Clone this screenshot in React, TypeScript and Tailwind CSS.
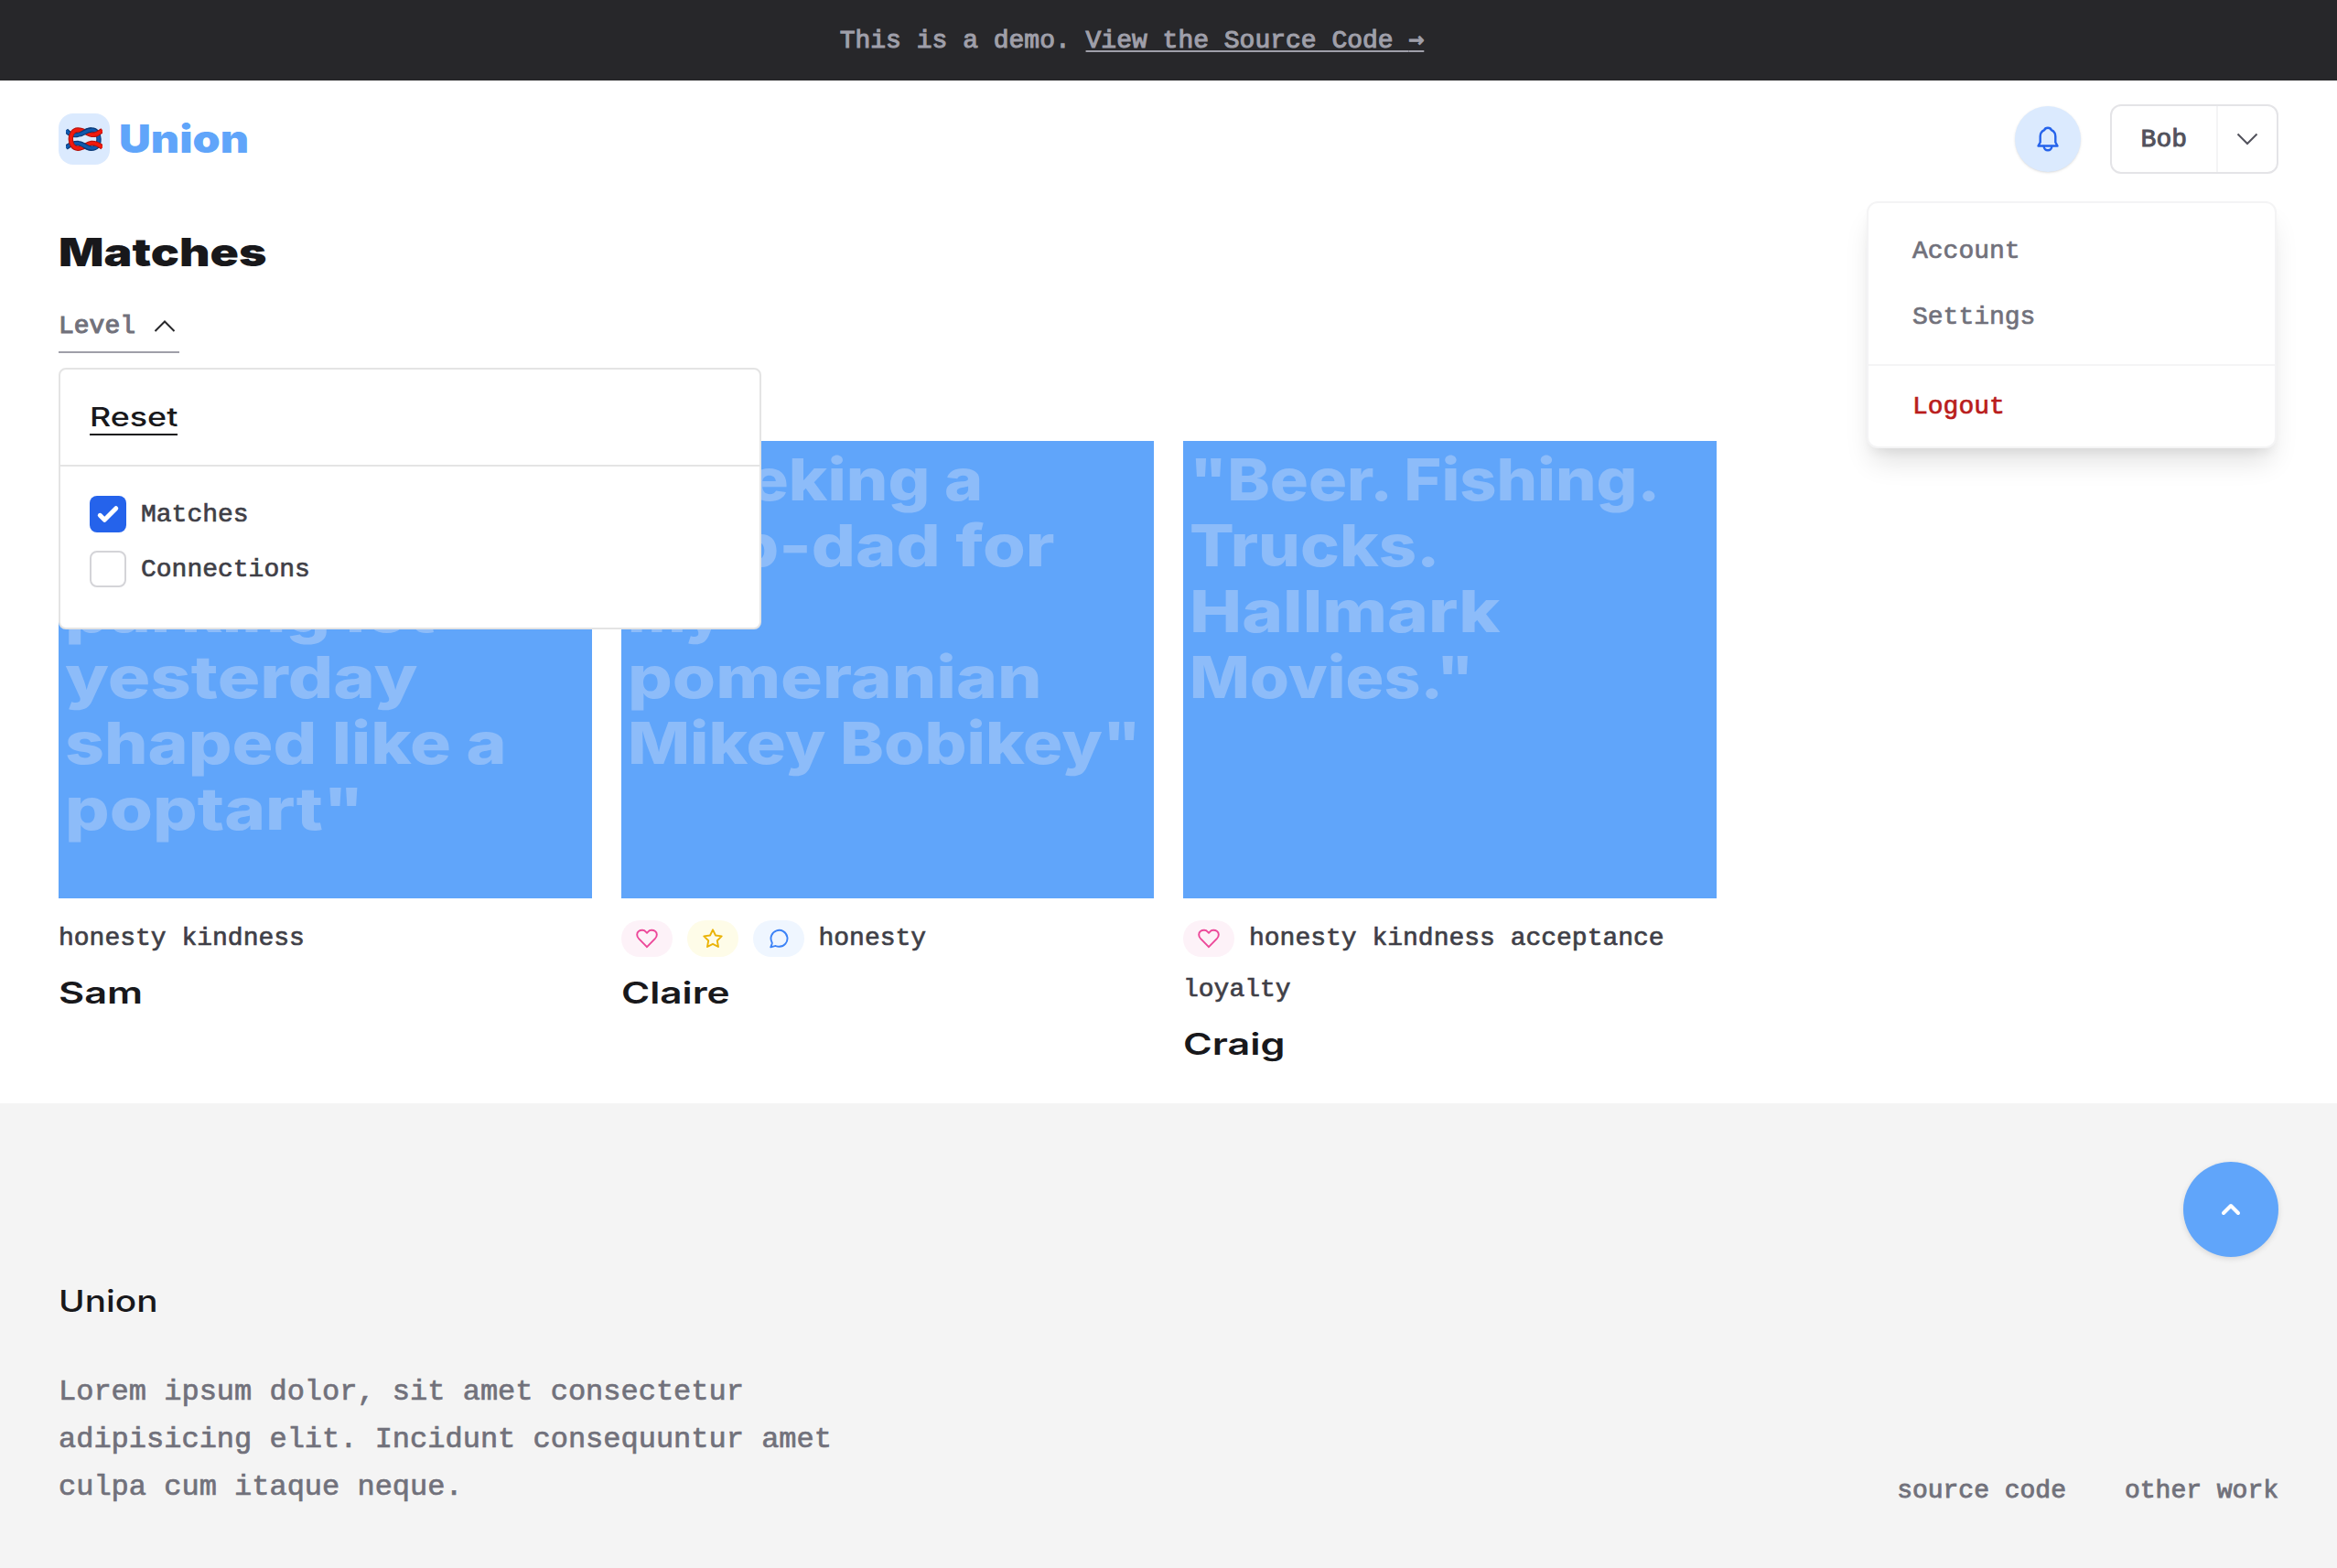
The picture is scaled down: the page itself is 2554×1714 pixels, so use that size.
import { useLayoutEffect, useRef, useState, type ReactNode } from "react";

/** Sets a line of display text to an expanded width. */
function Wide({ children, width, className = "" }: { children: string; width: number; className?: string }) {
  const ref = useRef<HTMLSpanElement>(null);
  const [scale, setScale] = useState(1);
  useLayoutEffect(() => {
    const fit = () => {
      if (ref.current && ref.current.offsetWidth) setScale(width / ref.current.offsetWidth);
    };
    fit();
    document.fonts?.ready.then(fit);
  }, [width, children]);
  return (
    <span className={`block ${className}`} style={{ width }}>
      <span
        ref={ref}
        className="inline-block origin-left align-top font-['Inter',sans-serif] whitespace-pre [-webkit-text-stroke:0]"
        style={{ transform: `scaleX(${scale})` }}
      >
        {children}
      </span>
    </span>
  );
}

function Knot() {
  const red = "M40 3.500C36 6.500 32 9.500 27 8C22 6 18 2.800 13 3C8 3.200 5.300 8 5.300 13C5.300 18 8 23 13 23.200C19 23.500 22 18.500 28 17.500C33 17 36 19 40 22";
  const blue = "M0 3.500C3 7 7 9.300 12 8.500C18 8 21 3 28 3C34 3 36 8 36 13C36 19 34 23.200 28 23.200C22 23.200 19 18 13 17.500C8 17.500 4 19 0 22.500";
  return (
    <svg viewBox="0 0 40 26" className="h-[26px] w-10" fill="none">
      <path d={blue} stroke="#0b3a78" strokeWidth="5.400" />
      <path d={blue} stroke="#1059ad" strokeWidth="3.200" />
      <path d={red} stroke="#b3120b" strokeWidth="5.400" />
      <path d={red} stroke="#f01a0e" strokeWidth="3.400" />
      <path d="M15.500 7.800C20 6.500 22 3.300 28 3" stroke="#0b3a78" strokeWidth="5.400" />
      <path d="M15 8C20 6.500 22 3.300 28.500 3" stroke="#1059ad" strokeWidth="3.200" />
      <path d="M28 23.200C23 23 20.500 19.500 15.500 18" stroke="#0b3a78" strokeWidth="5.400" />
      <path d="M28.500 23.200C23 23 20.500 19.500 15 18" stroke="#1059ad" strokeWidth="3.200" />
    </svg>
  );
}

const pillStyles = {
  heart: "bg-[#fdf2f8] text-[#ec4899]",
  star: "bg-[#fefce8] text-[#eab308]",
  chat: "bg-[#eff6ff] text-[#3b82f6]",
};

function Pill({ kind }: { kind: "heart" | "star" | "chat" }) {
  return (
    <span className={`mr-4 inline-flex h-10 w-14 items-center justify-center rounded-[20px] align-middle ${pillStyles[kind]}`}>
      <svg viewBox="0 0 24 24" className="size-6" fill="none" stroke="currentColor" strokeWidth="1.9" strokeLinejoin="round" strokeLinecap="round">
        {kind === "heart" && (
          <path d="M12 21.200L3.200 12.200C.4 9.200 .8 5.600 2.900 4.000C5.400 2.200 9 2.400 10.600 4.400L12 5.800L13.400 4.400C15 2.400 18.600 2.200 21.100 4.000C23.200 5.600 23.600 9.200 20.800 12.200Z" />
        )}
        {kind === "star" && (
          <path d="M12 2.300L15 8.500L21.700 9.400L16.800 14.200L18 21L12 17.800L6 21L7.200 14.200L2.300 9.400L9 8.500Z" />
        )}
        {kind === "chat" && (
          <path d="M12.500 20.800A9 9 0 1 0 4.600 16.100C4.800 16.600 4.800 17 4.700 17.500L3.300 21.400L7.700 20.200C8.200 20 8.600 20 9 20.200C10.100 20.600 11.200 20.800 12.500 20.800Z" />
        )}
      </svg>
    </span>
  );
}

type Line = [string, number];

function Card({ lines, pills = [], tags, name, nameWidth }: {
  lines: Line[];
  pills?: ("heart" | "star" | "chat")[];
  tags: string;
  name: string;
  nameWidth: number;
}) {
  return (
    <article>
      <div className="flex h-[500px] flex-col bg-[#60a5fa] px-2 pt-1.5 text-[63.5px] leading-[72px] font-extrabold text-[#8dbcf9]">
        {lines.map(([text, width], i) =>
          text ? <Wide key={i} width={width} className="-ml-px">{text}</Wide> : <span key={i} className="h-[72px]" />
        )}
      </div>
      <div className="mt-4 text-[28px] leading-[56px] text-zinc-700">
        {pills.map((p) => <Pill key={p} kind={p} />)}
        {tags}
      </div>
      <h3 className="-mt-px mb-px text-[33px] leading-[64px] font-semibold text-[#18181b]">
        <Wide width={nameWidth}>{name}</Wide>
      </h3>
    </article>
  );
}

function Option({ checked, children }: { checked?: boolean; children: ReactNode }) {
  return (
    <label className="flex h-10 items-center gap-4 text-[28px] text-zinc-700">
      {checked ? (
        <span className="flex size-10 items-center justify-center rounded-lg bg-[#2563eb]">
          <svg viewBox="0 0 16 16" className="size-10" fill="#fff">
            <path d="M12.207 4.793a1 1 0 0 1 0 1.414l-5 5a1 1 0 0 1-1.414 0l-2-2a1 1 0 0 1 1.414-1.414L6.500 9.086l4.293-4.293a1 1 0 0 1 1.414 0z" />
          </svg>
        </span>
      ) : (
        <span className="size-10 rounded-lg border-2 border-zinc-300 bg-white" />
      )}
      <span className="pt-px">{children}</span>
    </label>
  );
}

export default function App() {
  return (
    <div className="min-h-[1714px] w-full bg-white font-['Liberation_Mono',monospace] [-webkit-text-stroke:0.7px]">
      <div className="flex h-[88px] items-center justify-center bg-zinc-800 pt-0.5 pr-20 text-[28px] text-zinc-400 [-webkit-text-stroke:1.1px]">
        <p>
          This is a demo.{" "}
          <a className="underline decoration-2 underline-offset-[3px] [text-decoration-skip-ink:none]">
            View the Source Code <span className="font-['DejaVu_Sans_Mono',monospace] leading-none">→</span>
          </a>
        </p>
      </div>

      <header className="flex h-32 items-center justify-between px-16">
        <div className="flex items-center gap-2.5">
          <div className="flex size-14 items-center justify-center rounded-2xl bg-[#dbeafe]">
            <Knot />
          </div>
          <Wide width={142} className="text-[42.500px] leading-[56px] font-black text-[#60a5fa]">Union</Wide>
        </div>
        <div className="relative flex items-center gap-8">
          <button className="flex size-[72px] items-center justify-center rounded-full bg-[#dbeafe] text-[#2563eb] shadow-sm">
            <svg viewBox="0 0 28 32" className="h-8 w-7" fill="none" stroke="currentColor" strokeWidth="2.400" strokeLinejoin="round" strokeLinecap="round">
              <path d="M3.500 23.500H24.500L22.300 19.500V13C22.300 9.500 20.500 7.400 17.800 6.200C17.300 4.600 16.200 3.800 14 3.800C11.800 3.800 10.700 4.600 10.200 6.200C7.500 7.400 5.700 9.500 5.700 13V19.500Z" />
              <path d="M9.700 24C9.700 26.500 11.500 28.200 14 28.200C16.500 28.200 18.300 26.500 18.300 24" />
            </svg>
          </button>
          <div className="flex h-[76px] items-stretch rounded-xl border-2 border-zinc-200 text-[28px] text-zinc-600">
            <span className="flex items-center border-r-2 border-zinc-100 px-8 pt-0.5 [-webkit-text-stroke:1px]">Bob</span>
            <span className="flex w-[64px] items-center justify-center">
              <svg viewBox="0 0 24 14" className="h-3.5 w-6" fill="none" stroke="currentColor" strokeWidth="2">
                <path d="M1.500 1.500L12 12L22.500 1.500" />
              </svg>
            </span>
          </div>
          <nav className="absolute top-[106px] right-0.5 z-20 w-[448px] rounded-xl border-2 border-zinc-100 bg-white text-[28px] text-zinc-500 shadow-[0_20px_30px_-6px_rgba(0,0,0,0.12),0_8px_12px_-4px_rgba(0,0,0,0.06)]">
            <div className="border-b-2 border-zinc-100 px-12 pt-[17px] pb-[15px]">
              <a className="block leading-[72px]">Account</a>
              <a className="block leading-[72px]">Settings</a>
            </div>
            <a className="block px-12 pt-[9px] pb-[7px] leading-[72px] text-[#b91c1c]">Logout</a>
          </nav>
        </div>
      </header>

      <main className="px-16 pb-8">
        <h1 className="pt-9 text-[42px] leading-[48px] font-black text-[#18181b]">
          <Wide width={227}>Matches</Wide>
        </h1>
        <div className="relative mt-8">
          <button className="flex h-[54px] items-center border-b-2 border-zinc-400 pb-0.5 text-[28px] text-zinc-500 [-webkit-text-stroke:1.1px]">
            <span className="w-[104px] text-left">Level</span>
            <svg viewBox="0 0 24 14" className="mr-1 h-3.5 w-6 text-zinc-800" fill="none" stroke="currentColor" strokeWidth="2">
              <path d="M1.500 12L12 1.500L22.500 12" />
            </svg>
          </button>
          <section className="absolute top-[70px] left-0 z-10 h-[286px] w-[768px] rounded-lg border-2 border-[#e4e4e4] bg-white">
            <div className="flex h-[106px] items-center border-b-2 border-[#e4e4e4] px-8">
              <div className="h-10 border-b-2 border-[#18181b] text-[28px] leading-[40px] font-medium text-[#18181b]">
                <Wide width={96}>Reset</Wide>
              </div>
            </div>
            <div className="flex flex-col gap-5 px-8 pt-8">
              <Option checked>Matches</Option>
              <Option>Connections</Option>
            </div>
          </section>
        </div>
        <div className="mt-24 grid grid-cols-4 gap-8">
          <Card
            lines={[["", 0], ["", 0], ["parking lot", 404], ["yesterday", 385], ["shaped like a", 483], ['poptart"', 327]]}
            tags="honesty kindness"
            name="Sam"
            nameWidth={92}
          />
          <Card
            lines={[['"Seeking a', 388], ["step-dad for", 467], ["my", 105], ["pomeranian", 453], ['Mikey Bobikey"', 561]]}
            pills={["heart", "star", "chat"]}
            tags="honesty"
            name="Claire"
            nameWidth={118}
          />
          <Card
            lines={[['"Beer. Fishing.', 514], ["Trucks.", 274], ["Hallmark", 339], ['Movies."', 311]]}
            pills={["heart"]}
            tags="honesty kindness acceptance loyalty"
            name="Craig"
            nameWidth={111}
          />
        </div>
      </main>

      <footer className="h-[508px] bg-[#f4f4f4] px-16 pt-16 text-zinc-500">
        <div className="flex justify-end">
          <button className="flex size-[104px] items-center justify-center rounded-full bg-[#60a5fa] shadow-[0_2px_6px_rgba(0,0,0,0.12)]">
            <svg viewBox="0 0 24 16" className="h-4 w-6" fill="none" stroke="#fff" strokeWidth="4" strokeLinecap="round" strokeLinejoin="round">
              <path d="M4 12L12 4L20 12" />
            </svg>
          </button>
        </div>
        <div className="mt-6 text-[33px] leading-[48px] font-medium text-[#18181b]">
          <Wide width={108}>Union</Wide>
        </div>
        <div className="mt-[50px] flex items-end justify-between">
          <p className="w-[896px] text-[32px] leading-[52px]">
            Lorem ipsum dolor, sit amet consectetur adipisicing elit. Incidunt consequuntur amet culpa cum itaque neque.
          </p>
          <div className="flex gap-16 pb-0.5 text-[28px] leading-[40px] [-webkit-text-stroke:0.9px]">
            <a>source code</a>
            <a>other work</a>
          </div>
        </div>
      </footer>
    </div>
  );
}
